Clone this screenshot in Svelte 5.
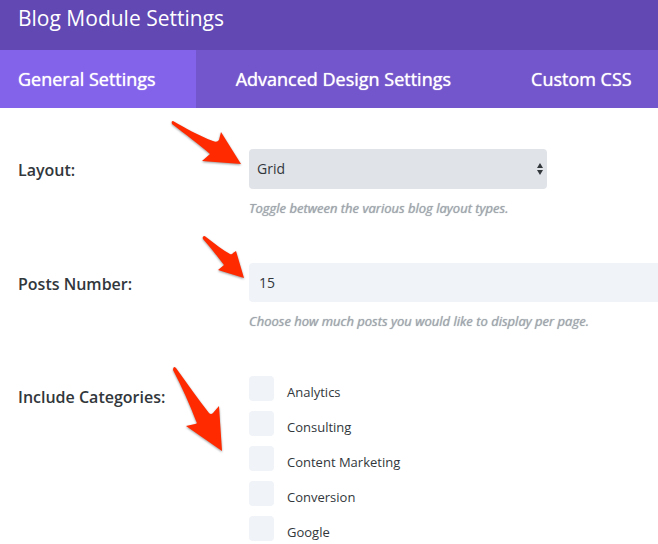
<script>
    const tabs = ['General Settings', 'Advanced Design Settings', 'Custom CSS'];
    const categories = ['Analytics', 'Consulting', 'Content Marketing', 'Conversion', 'Google'];

    let activeTab = $state(tabs[0]);
    let layout = $state('Grid');
    let postsNumber = $state('15');
    let selected = $state([]);
</script>

<div class="module-settings">
    <h1>Blog Module Settings</h1>

    <nav class="tabs">
        {#each tabs as tab}
            <button type="button" class:active={tab === activeTab} onclick={() => (activeTab = tab)}>
                {tab}
            </button>
        {/each}
    </nav>

    <form>
        <div class="option">
            <label class="title" for="layout">Layout:</label>
            <div class="field">
                <div class="select">
                    <select id="layout" bind:value={layout}>
                        <option>Grid</option>
                        <option>Fullwidth</option>
                    </select>
                    <svg class="toggle" viewBox="0 0 6 12" aria-hidden="true">
                        <path d="M3 0l3 5H0zM0 7h6l-3 5z" />
                    </svg>
                </div>
                <p class="description">Toggle between the various blog layout types.</p>
                <svg class="arrow to-layout" viewBox="0 0 70 44" aria-hidden="true">
                    <path
                        d="M2 0C13 6 28 15 42 20Q46 22 48 19L50 11L70 43L31 40L39 33C29 24 14 13
                        1 3Q0 0 2 0z" />
                </svg>
            </div>
        </div>

        <div class="option">
            <label class="title" for="posts-number">Posts Number:</label>
            <div class="field">
                <input id="posts-number" type="text" bind:value={postsNumber} />
                <p class="description">Choose how much posts you would like to display per page.</p>
                <svg class="arrow to-posts" viewBox="0 0 42 43" aria-hidden="true">
                    <path
                        d="M1 0Q2 0 3 1C12 8 20 14 27 18Q29 19 30 17L33 15L41 42L15 34L21 29C15 21 7
                        11 0 3Q-1 1 1 0z" />
                </svg>
            </div>
        </div>

        <div class="option">
            <span class="title" id="categories-title">Include Categories:</span>
            <div class="field" role="group" aria-labelledby="categories-title">
                {#each categories as category}
                    <label class="category">
                        <input type="checkbox" value={category} bind:group={selected} />
                        <span>{category}</span>
                    </label>
                {/each}
                <svg class="arrow to-categories" viewBox="0 0 50 84" aria-hidden="true">
                    <path
                        d="M1 0Q2 0 3 1C14 16 25 32 36 46Q38 48 40 46L46 39L49 84L13 59L22 57Q25 57
                        23 54C17 38 9 20 0 3Q0 1 1 0z" />
                </svg>
            </div>
        </div>
    </form>
</div>

<style>
    :global(body) {
        margin: 0;
        background: #fff;
    }

    .module-settings {
        font-family: 'Open Sans', sans-serif;
        color: #32373c;
    }

    h1 {
        margin: 0;
        padding: 2px 18px 16px;
        background: #6148b3;
        color: #fff;
        font-size: 21px;
        font-weight: 400;
        line-height: 32px;
    }

    .tabs {
        display: flex;
        background: #7356cb;
    }

    .tabs button {
        padding: 0 40px;
        border: 0;
        background: transparent;
        color: #fff;
        font-family: inherit;
        font-size: 18px;
        font-weight: 500;
        line-height: 58px;
        text-shadow: 0 0 1px #fff;
        white-space: nowrap;
        cursor: pointer;
    }

    .tabs button:first-child {
        padding-left: 18px;
    }

    .tabs button.active {
        background: #8463eb;
    }

    form {
        padding: 41px 0 0 18px;
    }

    .option {
        display: grid;
        grid-template-columns: 231px 1fr;
        margin-bottom: 45px;
    }

    .option:last-child {
        margin-bottom: 0;
    }

    .title {
        font-size: 16px;
        font-weight: 600;
        line-height: 42px;
    }

    .field {
        position: relative;
    }

    .select {
        position: relative;
        max-width: 298px;
    }

    select,
    input[type='text'] {
        display: block;
        box-sizing: border-box;
        width: 100%;
        margin: 0;
        border: 0;
        appearance: none;
        color: #32373c;
        font-family: inherit;
        font-size: 14px;
    }

    select {
        height: 40px;
        padding: 0 24px 2px 8px;
        border-radius: 4px;
        background: #e0e3e8;
    }

    input[type='text'] {
        height: 39px;
        padding: 0 10px;
        border-radius: 4px 0 0 4px;
        background: #f0f3f8;
    }

    .toggle {
        position: absolute;
        top: 14px;
        right: 4px;
        width: 6px;
        height: 12px;
        fill: #32373c;
        pointer-events: none;
    }

    .description {
        margin: 9px 0 0;
        color: #a0a6ad;
        font-size: 13px;
        font-style: italic;
        font-weight: 500;
        line-height: 20px;
        text-shadow: 0 0 1px #a0a6ad;
    }

    .category {
        display: flex;
        gap: 13px;
        height: 35px;
        font-size: 13px;
        line-height: 32px;
    }

    .category input {
        width: 25px;
        height: 25px;
        margin: 0;
        border-radius: 4px;
        appearance: none;
        background: #f0f3f8;
    }

    .category input:checked {
        background: #8463eb;
    }

    .arrow {
        position: absolute;
        overflow: visible;
        fill: #ff2a00;
        filter: drop-shadow(0 1px 1px rgba(0, 0, 0, 0.4));
        pointer-events: none;
    }

    .to-layout {
        top: -28px;
        left: -78px;
        width: 70px;
        height: 44px;
    }

    .to-posts {
        top: -27px;
        left: -46px;
        width: 42px;
        height: 43px;
    }

    .to-categories {
        top: -9px;
        left: -76px;
        width: 50px;
        height: 84px;
    }
</style>
